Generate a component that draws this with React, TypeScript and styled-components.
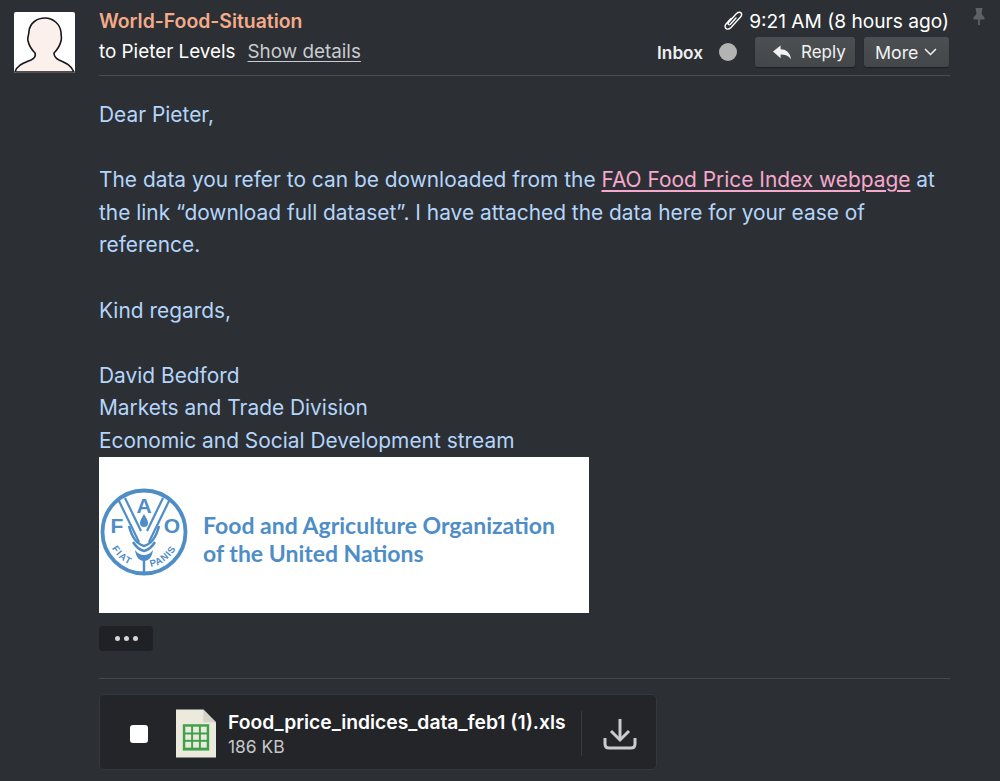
import React from "react";
import styled, { createGlobalStyle } from "styled-components";

const Global = createGlobalStyle`
  html, body { margin: 0; padding: 0; background: #2c2f33; }
  body { font-family: Inter, "Liberation Sans", Arial, sans-serif; overflow: hidden; }
  #root { width: 1000px; height: 781px; overflow: hidden; }
`;

const Page = styled.div`
  display: grid;
  grid-template-columns: 85px 851px 1fr;
  padding: 12px 0 0 14px;
  height: 769px;
  width: 986px;
  background: #2c2f33;
`;
const Avatar = styled.div`
  width: 61px;
  height: 61px;
  background: #fff;
  border-radius: 2px;
  overflow: hidden;
`;
const Main = styled.div`
  min-width: 0;
`;
const Header = styled.header`
  display: flex;
  justify-content: space-between;
  height: 63px;
  border-bottom: 1px solid #4a4d51;
`;
const Who = styled.div`
  display: flex;
  flex-direction: column;
`;
const Sender = styled.div`
  font-size: 19.4px;
  font-weight: 600;
  line-height: 18px;
  color: #f3ab8b;
`;
const Recipient = styled.div`
  margin-top: 10px;
  font-size: 18.85px;
  line-height: 24px;
  color: #fff;
  display: flex;
  gap: 12px;
`;
const Details = styled.span`
  color: #c9ccd1;
  text-decoration: underline;
  text-underline-offset: 3px;
  text-decoration-thickness: 1px;
`;
const Meta = styled.div`
  display: flex;
  flex-direction: column;
  align-items: flex-end;
  padding-right: 1px;
`;
const Time = styled.div`
  display: flex;
  align-items: center;
  gap: 5px;
  margin-top: -1px;
  font-size: 19.15px;
  line-height: 20px;
  color: #fff;
`;
const Actions = styled.div`
  margin-top: 6px;
  display: flex;
  align-items: center;
`;
const Label = styled.span`
  font-size: 17.2px;
  font-weight: 600;
  color: #f0f0f0;
`;
const Dot = styled.span`
  width: 18px;
  height: 18px;
  border-radius: 50%;
  background: #b3b3b3;
  margin: 0 18px 0 16px;
`;
const Btn = styled.button<{ $w: number; $pad: number; $gap: number; $size: number }>`
  width: ${(p) => p.$w}px;
  height: 30px;
  padding: 0 0 0 ${(p) => p.$pad}px;
  border: none;
  border-radius: 3px;
  background: linear-gradient(#4d5053, #44474a);
  box-shadow: 0 1px 1px #1d1f22;
  color: #f2f2f2;
  font-family: inherit;
  font-size: ${(p) => p.$size}px;
  display: flex;
  align-items: center;
  gap: ${(p) => p.$gap}px;
  & + & {
    margin-left: 9px;
  }
`;
const Pin = styled.div`
  margin-left: 23px;
  margin-top: -4px;
`;
const Body = styled.div`
  padding-top: 23px;
  color: #b4d5fc;
  font-size: 20.9px;
  line-height: 32.6px;
`;
const Para = styled.p`
  margin: 0 0 32.6px;
`;
const Sign = styled.p`
  margin: 0 0 -1px;
`;
const Link = styled.a`
  color: #f7a8cf;
  text-decoration: underline;
  text-underline-offset: 3px;
  text-decoration-thickness: 1.5px;
`;
const Logo = styled.div`
  width: 490px;
  height: 156px;
  background: #fff;
  display: flex;
  align-items: center;
  gap: 15px;
  padding: 0 0 6px 1px;
  box-sizing: border-box;
`;
const LogoText = styled.div`
  font-family: Lato, "Liberation Sans", sans-serif;
  font-weight: 700;
  font-size: 23px;
  line-height: 27.5px;
  color: #4f8dc7;
  white-space: nowrap;
  margin-top: 16px;
`;
const More = styled.div`
  margin-top: 13px;
  width: 54px;
  height: 25px;
  border-radius: 4px;
  background: #1f2125;
  display: flex;
  align-items: center;
  justify-content: center;
  gap: 4px;
`;
const MoreDot = styled.span`
  width: 5px;
  height: 5px;
  border-radius: 50%;
  background: #d4d6d8;
`;
const Rule = styled.div`
  margin-top: 27px;
  height: 1px;
  background: #45484c;
`;
const Card = styled.div`
  margin-top: 15px;
  width: 558px;
  height: 76px;
  box-sizing: border-box;
  padding-top: 4px;
  background: #232529;
  border: 1px solid #35383c;
  border-radius: 5px;
  display: flex;
  align-items: center;
`;
const Check = styled.span`
  width: 18px;
  height: 18px;
  margin-left: 30px;
  border-radius: 3px;
  background: #fff;
  flex: none;
`;
const FileIcon = styled.div`
  margin-left: 28px;
  flex: none;
  display: flex;
`;
const FileInfo = styled.div`
  margin: 2px 0 0 12px;
  width: 353px;
  flex: none;
`;
const FileName = styled.div`
  font-size: 19.3px;
  font-weight: 600;
  line-height: 24px;
  color: #fff;
  white-space: nowrap;
`;
const FileSize = styled.div`
  margin-top: 1px;
  font-size: 17.4px;
  line-height: 24px;
  color: #c5c7ca;
`;
const Sep = styled.div`
  width: 1px;
  height: 45px;
  background: #36393d;
  flex: none;
`;
const Download = styled.div`
  margin-left: 21px;
  display: flex;
`;

const BLUE = "#4f8dc7";

export default function App() {
  return (
    <>
      <Global />
      <Page>
        <Avatar>
          <svg width="61" height="61" viewBox="0 0 61 61">
            <path
              d="M1 60C3 53 10 51 17 48C21 46 22 44 21 41C17 37 15 33 14 29C13 26 15 23 15 19C16 11 23 6 31 6C39 6 46 12 47 20C47 24 48 26 47 29C46 33 43 38 40 41C40 44 41 46 45 48C52 51 57 53 60 60Z"
              fill="#fbf0eb"
              stroke="#16181a"
              strokeWidth="1.6"
              strokeLinejoin="round"
            />
          </svg>
        </Avatar>
        <Main>
          <Header>
            <Who>
              <Sender>World-Food-Situation</Sender>
              <Recipient>
                <span>to Pieter Levels</span>
                <Details>Show details</Details>
              </Recipient>
            </Who>
            <Meta>
              <Time>
                <svg width="21" height="20" viewBox="0 0 21 20" fill="none" stroke="#fff" strokeWidth="1.4" strokeLinecap="round">
                  <path d="M8 7.5L3 13C1.5 15 2 17 3.500 17.800C5 18.600 6.500 18 8 16.500L17.500 6C19.500 3.500 18.500 2 17.500 1.500C16 0.800 14.500 1.200 13 3L5.500 11.500C4.500 13 5.500 14.500 7.200 13.500L13 7" />
                </svg>
                <span>9:21 AM (8 hours ago)</span>
              </Time>
              <Actions>
                <Label>Inbox</Label>
                <Dot />
                <Btn $w={100} $pad={18} $gap={10} $size={17}>
                  <svg width="18" height="15" viewBox="0 0 19 15">
                    <path d="M0 6.500L8 0V4C14 4 18 7.500 19 14.500C16.500 11 13 9.500 8 9.500V13.500Z" fill="#f2f2f2" />
                  </svg>
                  <span>Reply</span>
                </Btn>
                <Btn $w={85} $pad={11} $gap={5} $size={17.8}>
                  <span>More</span>
                  <svg width="13" height="8" viewBox="0 0 13 8" fill="none" stroke="#f2f2f2" strokeWidth="1.500">
                    <path d="M1 1L6.500 6.500L12 1" />
                  </svg>
                </Btn>
              </Actions>
            </Meta>
          </Header>
          <Body>
            <Para>Dear Pieter,</Para>
            <Para>
              The data you refer to can be downloaded from the <Link>FAO Food Price Index webpage</Link> at
              <br />
              the link “download full dataset”. I have attached the data here for your ease of
              <br />
              reference.
            </Para>
            <Para>Kind regards,</Para>
            <Sign>
              David Bedford
              <br />
              Markets and Trade Division
              <br />
              Economic and Social Development stream
            </Sign>
          </Body>
          <Logo>
            <svg width="88" height="88" viewBox="0 0 88 88">
              <defs>
                <path id="fao-arc" d="M9 52A36 36 0 0 0 79 52" />
              </defs>
              <circle cx="44" cy="44" r="41.500" fill="none" stroke={BLUE} strokeWidth="3.800" />
              <g fill="none" stroke={BLUE} strokeWidth="2.200">
                <path d="M19 13L39 54" />
                <path d="M25 10L41 43" />
                <path d="M69 13L49 54" />
                <path d="M63 10L47 43" />
                <path d="M29 38C32 50 37 56 44 58C51 56 56 50 59 38" strokeWidth="2.500" />
                <path d="M33 54C36 59 40 62 44 63C48 62 52 59 55 54" strokeWidth="2.500" />
                <path d="M44 70V85" strokeWidth="2.500" />
              </g>
              <path d="M35 62C36 69 39 73 44 73C49 73 52 69 53 62C50 66 47 67 44 67C41 67 38 66 35 62Z" fill={BLUE} />
              <path d="M44 26C47 31 48 33 48 35C48 38 46 39 44 39C42 39 40 38 40 35C40 33 41 31 44 26Z" fill={BLUE} />
              <g fill={BLUE} fontFamily="'Liberation Sans', sans-serif" fontWeight="700" textAnchor="middle" fontSize="21">
                <text x="44" y="25">A</text>
                <text x="17" y="45">F</text>
                <text x="72" y="45">O</text>
              </g>
              <text fill={BLUE} fontFamily="'Liberation Sans', sans-serif" fontWeight="700" fontSize="9.500" letterSpacing="1.200">
                <textPath href="#fao-arc" startOffset="9%">FIAT</textPath>
              </text>
              <text fill={BLUE} fontFamily="'Liberation Sans', sans-serif" fontWeight="700" fontSize="9.500" letterSpacing="0.800">
                <textPath href="#fao-arc" startOffset="57%">PANIS</textPath>
              </text>
            </svg>
            <LogoText>
              Food and Agriculture Organization
              <br />
              of the United Nations
            </LogoText>
          </Logo>
          <More>
            <MoreDot />
            <MoreDot />
            <MoreDot />
          </More>
          <Rule />
          <Card>
            <Check />
            <FileIcon>
              <svg width="40" height="49" viewBox="0 0 41 49">
                <path d="M0 0H28L41 13V49H0Z" fill="#ece9dd" />
                <path d="M28 0L41 13H28Z" fill="#d6d3c8" />
                <rect x="7" y="15" width="27" height="27" fill="#3fa14a" />
                <g fill="#ece9dd">
                  <rect x="9.500" y="17.500" width="6" height="6" />
                  <rect x="17.500" y="17.500" width="6" height="6" />
                  <rect x="25.500" y="17.500" width="6" height="6" />
                  <rect x="9.500" y="25.500" width="6" height="5.500" />
                  <rect x="17.500" y="25.500" width="6" height="5.500" />
                  <rect x="25.500" y="25.500" width="6" height="5.500" />
                  <rect x="9.500" y="33" width="6" height="6" />
                  <rect x="17.500" y="33" width="6" height="6" />
                  <rect x="25.500" y="33" width="6" height="6" />
                </g>
              </svg>
            </FileIcon>
            <FileInfo>
              <FileName>Food_price_indices_data_feb1 (1).xls</FileName>
              <FileSize>186 KB</FileSize>
            </FileInfo>
            <Sep />
            <Download>
              <svg width="34" height="32" viewBox="0 0 34 32" fill="none" stroke="#c9cbce" strokeWidth="3">
                <path d="M17 1V21" />
                <path d="M8 13L17 22L26 13" />
                <path d="M2 20V26C2 28.500 3.500 30 6 30H28C30.500 30 32 28.500 32 26V20" />
              </svg>
            </Download>
          </Card>
        </Main>
        <Pin>
          <svg width="12" height="18" viewBox="0 0 12 18">
            <path d="M2.500 0H9.500L8.500 6L11.500 9.500V11.500H0.500V9.500L3.500 6Z" fill="#5f6265" />
            <path d="M6 11V17" stroke="#5f6265" strokeWidth="1.800" />
          </svg>
        </Pin>
      </Page>
    </>
  );
}
